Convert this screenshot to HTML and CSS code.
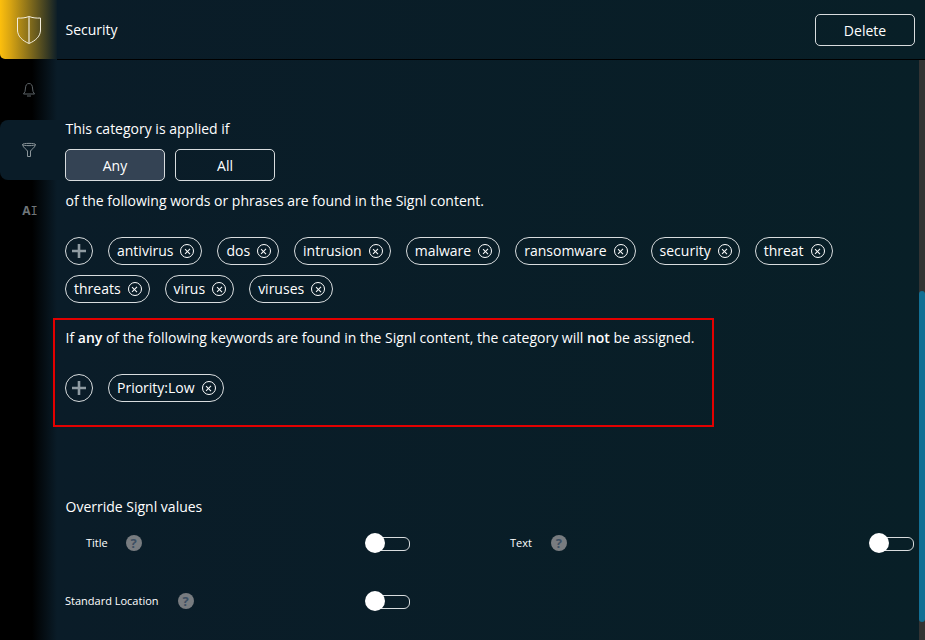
FILE: index.html
```html
<!DOCTYPE html>
<html lang="en">
<head>
<meta charset="utf-8">
<title>Security</title>
<link rel="stylesheet" href="styles.css">
</head>
<body>
<div class="app">
  <nav class="rail">
    <div class="rail-top">
      <svg class="ico" width="26" height="30" viewBox="0 0 26 30" fill="none"><path d="M13 1.5 C9 3 5 3.3 1.5 3 V15 C1.5 21 6 25.5 13 28.5 C20 25.5 24.5 21 24.5 15 V3 C21 3.3 17 3 13 1.5 Z" stroke="#f4eedd" stroke-width="1"/><path d="M13 2V28" stroke="#d9d0b0" stroke-width="1.6"/></svg>
    </div>
    <div class="rail-item">
      <svg width="14" height="16" viewBox="0 0 14 16" fill="none" stroke="#5d6468" stroke-width="1"><path d="M7 1.5C4.5 1.5 3.6 3.6 3.5 6L3 9.5 1.5 12h11L11 9.5 10.5 6C10.4 3.6 9.5 1.5 7 1.5Z"/><path d="M5 14h4"/></svg>
    </div>
    <div class="rail-item active">
      <svg width="16" height="16" viewBox="0 0 16 16" fill="none" stroke="#8b959a" stroke-width="1"><path d="M1.5 2.5C1.5 1 14.5 1 14.5 2.5 14.5 4 1.5 4 1.5 2.5Z"/><path d="M1.5 2.5C2 6 6.5 8 6.5 9V14.5H9.5V9C9.5 8 14 6 14.5 2.5"/></svg>
    </div>
    <div class="rail-item"><span class="ai">A<span class="cursor">I</span></span></div>
  </nav>
  <div class="main">
    <header class="top">
      <span class="top-title">Security</span>
      <button class="btn delete">Delete</button>
    </header>
    <div class="body">
      <section class="content">
        <p class="line">This category is applied if</p>
        <div class="seg">
          <button class="btn seg-btn on">Any</button>
          <button class="btn seg-btn">All</button>
        </div>
        <p class="line after-seg">of the following words or phrases are found in the Signl content.</p>
        <div class="chips words">
          <button class="plus"><svg width="18" height="18" viewBox="0 0 18 18"><path d="M9 2v14M2 9h14" stroke="#8f9ba2" stroke-width="2.6"/></svg></button>
          <span class="chip">antivirus<i class="x"></i></span>
          <span class="chip">dos<i class="x"></i></span>
          <span class="chip">intrusion<i class="x"></i></span>
          <span class="chip">malware<i class="x"></i></span>
          <span class="chip">ransomware<i class="x"></i></span>
          <span class="chip">security<i class="x"></i></span>
          <span class="chip">threat<i class="x"></i></span>
          <span class="chip">threats<i class="x"></i></span>
          <span class="chip">virus<i class="x"></i></span>
          <span class="chip">viruses<i class="x"></i></span>
        </div>
        <div class="exclude">
          <p class="line">If <b>any</b> of the following keywords are found in the Signl content, the category will <b>not</b> be assigned.</p>
          <div class="chips">
            <button class="plus"><svg width="18" height="18" viewBox="0 0 18 18"><path d="M9 2v14M2 9h14" stroke="#8f9ba2" stroke-width="2.6"/></svg></button>
            <span class="chip">Priority:Low<i class="x"></i></span>
          </div>
        </div>
        <p class="line override">Override Signl values</p>
        <div class="grid">
          <div class="row indent"><span class="label">Title</span><span class="help">?</span><span class="toggle"></span></div>
          <div class="row"><span class="label">Text</span><span class="help">?</span><span class="toggle"></span></div>
          <div class="row"><span class="label">Standard Location</span><span class="help">?</span><span class="toggle"></span></div>
        </div>
      </section>
      <div class="scrollbar"><div class="thumb"></div></div>
    </div>
  </div>
</div>
</body>
</html>
```
FILE: styles.css
```css
* { box-sizing: border-box; }
html, body { margin: 0; height: 100%; background: #000; overflow: hidden; }
body { font-family: "Open Sans", "Noto Sans", sans-serif; font-size: 14px; color: #fff; }
.app { display: flex; width: 925px; height: 640px; background: #0a1c28; }
.rail { width: 57px; flex: none; background: linear-gradient(90deg, #000 0, #000 32px, #0a1c28 57px); }
.rail-top { height: 59px; display: flex; align-items: center; justify-content: center; border-radius: 0 0 0 5px; background: linear-gradient(90deg, #fdbf0d 0, #d9a512 10px, #0a1c28 58px); }
.rail-item { height: 60px; display: flex; align-items: center; justify-content: center; }
.rail-top + .rail-item { margin-top: 1px; }
.rail-item.active { background: #0a1c28; border-radius: 8px 0 0 8px; }
.ai { font-size: 12px; font-weight: 700; color: #6f767a; margin-left: 3px; }
.cursor { font-family: "Liberation Mono", monospace; font-weight: 400; }
.main { flex: 1; min-width: 0; display: flex; flex-direction: column; background: linear-gradient(90deg, #0a1c28, #081f27); }
.top { height: 60px; flex: none; display: flex; align-items: center; justify-content: space-between; padding: 1px 10px 0 8.5px; border-bottom: 1px solid #000; border-top-right-radius: 6px; }
.top-title { font-size: 14px; margin-bottom: 2px; }
.btn { font: inherit; color: #fff; background: transparent; border: 1px solid #d8dcde; border-radius: 5px; width: 100px; height: 32px; padding: 0; }
.body { flex: 1; min-height: 0; display: flex; }
.content { flex: 1; min-width: 0; padding: 59px 5px 0 8px; }
.line { margin: 0; padding-left: .5px; line-height: 20px; }
.seg { display: flex; gap: 10px; margin-top: 10px; }
.seg-btn.on { background: #344354; }
.after-seg { margin-top: 10px; }
.chips { display: flex; flex-wrap: wrap; gap: 10px 15px; }
.words { margin-top: 26px; }
.plus { width: 28px; height: 28px; padding: 0; border: 1px solid #d8dcde; border-radius: 50%; background: transparent; display: flex; align-items: center; justify-content: center; }
.chip { height: 28px; display: inline-flex; align-items: center; gap: 7px; padding: 0 7px 0 8px; border: 1px solid #d8dcde; border-radius: 14px; line-height: 1; }
.x { width: 14px; height: 14px; border: 1px solid #fff; border-radius: 50%; position: relative; flex: none; }
.x::before, .x::after { content: ""; position: absolute; left: 5.4px; top: 2.5px; width: 1.2px; height: 7px; background: #fff; transform: rotate(45deg); }
.x::after { transform: rotate(-45deg); }
.exclude { margin: 15px 0 0 -12px; width: 661px; height: 109px; border: 2px solid #e30000; padding: 8px 10px 0; }
.exclude .chips { margin-top: 26px; }
.override { margin-top: 70px; }
.grid { display: grid; grid-template-columns: 345px 404px; column-gap: 100px; row-gap: 38px; margin-top: 16px; }
.row { display: flex; align-items: center; height: 20px; }
.indent { padding-left: 21px; }
.label { font-size: 11px; margin-right: 19px; margin-bottom: 2px; }
.indent .label { margin-right: 18px; }
.help { width: 16px; height: 16px; border-radius: 50%; background: #787c80; color: #3c4f63; font-size: 13px; font-weight: 700; line-height: 16px; text-align: center; }
.toggle { margin-left: auto; width: 45px; height: 20px; position: relative; }
.toggle::before { content: ""; position: absolute; left: 8px; right: 0; top: 4px; height: 12px; border: 1px solid #d8dcde; border-radius: 6px; }
.toggle::after { content: ""; position: absolute; left: 0; top: 0; width: 20px; height: 20px; border-radius: 50%; background: #fff; }
.scrollbar { width: 6px; flex: none; background: #333; padding-top: 231px; padding-bottom: 18px; }
.thumb { height: 100%; background: #126f94; border-radius: 3px; }
b { font-weight: 600; }
```
